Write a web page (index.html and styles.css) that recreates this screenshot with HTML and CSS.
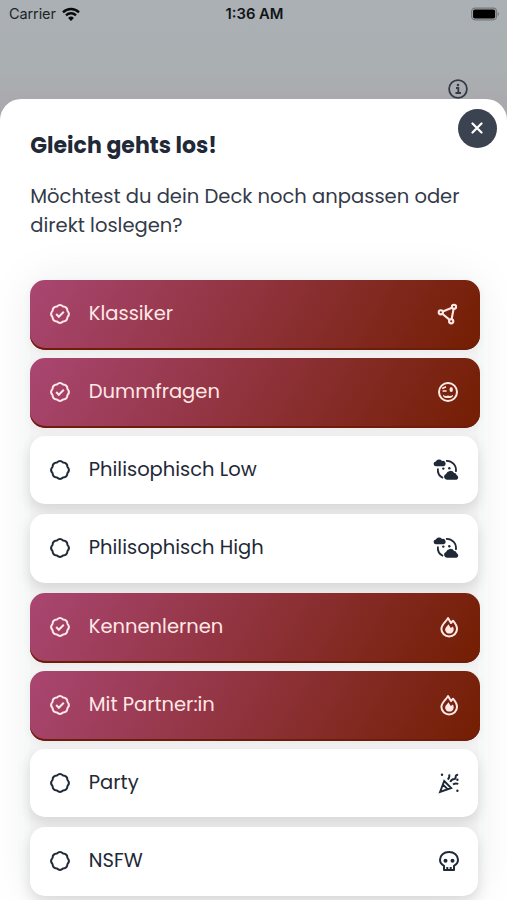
FILE: index.html
```html
<!DOCTYPE html>
<html lang="de">
<head>
<meta charset="UTF-8">
<meta name="viewport" content="width=device-width, initial-scale=1.0">
<title>Gleich gehts los!</title>
<link rel="stylesheet" href="styles.css">
</head>
<body>
<svg class="sprite" aria-hidden="true">
    <symbol id="badge" viewBox="0 0 24 24">
        <path d="M19.85 8.75Q19.74 4.26 15.25 4.15 12 1.05 8.75 4.15 4.26 4.26 4.15 8.75 1.05 12 4.15 15.25 4.26 19.74 8.75 19.85 12 22.95 15.25 19.85 19.74 19.74 19.85 15.25 22.95 12 19.85 8.75z" transform="translate(.6 .6) scale(.95)" fill="none" stroke="currentColor" stroke-width="2.1"/>
    </symbol>
    <symbol id="badge-check" viewBox="0 0 24 24">
        <use href="#badge"/>
        <path d="m8.2 12 2.6 2.7 5-5" fill="none" stroke="currentColor" stroke-width="2"/>
    </symbol>
    <symbol id="network" viewBox="0 0 24 24">
        <g fill="none" stroke="currentColor" stroke-width="2.1">
            <circle cx="4.8" cy="10.3" r="2.1"/>
            <circle cx="18" cy="4.8" r="2.1"/>
            <circle cx="15.2" cy="19.3" r="2.1"/>
            <path d="m6.8 9.5 9.2-3.8M6.3 11.8l7.4 6.1M17.6 6.9l-2 10.4"/>
        </g>
    </symbol>
    <symbol id="wink" viewBox="0 0 24 24">
        <g fill="none" stroke="currentColor" stroke-width="2">
            <circle cx="12" cy="12" r="9"/>
            <path d="m6.2 8.5 3.8-1.8M6.6 11h4" stroke-width="1.7"/>
            <path d="M6.8 14.7q2.6 1.9 5.2.9 2.6 1 5.2-.9-.6 4-5.2 3.2-4.6.8-5.2-3.2z" fill="currentColor" stroke="none"/>
        </g>
        <ellipse cx="15.2" cy="9.5" rx="1.7" ry="2.6" fill="currentColor"/>
    </symbol>
    <symbol id="clouds" viewBox="0 0 26 24">
        <path d="M13 2.9a9.2 9.2 0 0 1 9.8 11M4.9 10.5a9.2 9.2 0 0 0 5.2 9.5" fill="none" stroke="currentColor" stroke-width="1.8"/>
        <g fill="currentColor">
            <path d="M3.3 8.2a2.4 2.4 0 0 1-.5-4.8A3.8 3.8 0 0 1 9 2.9a2.7 2.7 0 0 1 1.6 5.3zM14 21.7a3 3 0 0 1-1-5.8 4.6 4.6 0 0 1 8.2-.9 2.6 2.6 0 0 1 2.5 2.2 2.4 2.4 0 0 1-.2 4.5z"/>
            <circle cx="10.3" cy="10.6" r="1.2"/>
            <circle cx="16.3" cy="10.2" r="1.2"/>
        </g>
    </symbol>
    <symbol id="flame" viewBox="0 0 24 24">
        <path d="M12 3C10.6 6.5 5.4 9.3 5.4 14a7.8 7.4 0 0 0 15.6 0c0-3.1-1.9-5.9-4-8.300L15 8z" fill="none" stroke="currentColor" stroke-width="2" stroke-linejoin="round"/>
        <path d="M12.4 9.3c-.7 2-3.3 3-3.3 5.2a4.3 4.1 0 0 0 8.6 0q0-1.6-.8-2.9l-2.1 1.5z" fill="currentColor"/>
    </symbol>
    <symbol id="party" viewBox="0 0 24 24">
        <g fill="none" stroke="currentColor" stroke-width="1.9">
            <path d="m7.2 10 7 7-11.1 4zM6.3 13.8l4.5 4.5M10.7 8.6q2-1.5 1.6-5.2M13.3 11q1.2-2.8 3.8-3 1.7-.2 1.5-2 .1-2.3 2.5-2.3M16 13.6q2.2-1.7 5.3-.7"/>
        </g>
        <g fill="currentColor">
            <circle cx="5" cy="3.8" r="1.2"/>
            <circle cx="20.4" cy="8.7" r="1.2"/>
            <circle cx="20.4" cy="19.7" r="1.2"/>
        </g>
    </symbol>
    <symbol id="skull" viewBox="0 0 24 24">
        <path d="M12 3c-5.2 0-9 3.3-9 7.8 0 2.8 1.5 4.7 4 6V21h10v-4.2c2.5-1.3 4-3.2 4-6C21 6.3 17.2 3 12 3zM10.3 18v3M13.7 18v3" fill="none" stroke="currentColor" stroke-width="2" stroke-linejoin="round"/>
        <circle cx="8.5" cy="11.8" r="2" fill="currentColor"/>
        <circle cx="15.5" cy="11.8" r="2" fill="currentColor"/>
    </symbol>
</svg>

<div class="screen">
    <header class="status-bar">
        <div class="carrier">
            <span>Carrier</span>
            <svg class="wifi" viewBox="0 0 18 14">
                <path d="M1 5.3a11.5 11.5 0 0 1 16 0M4 8.3a7.2 7.2 0 0 1 10 0" fill="none" stroke="#080a0c" stroke-width="2.4"/>
                <path d="M9 14 6.1 10.9a4.2 4.2 0 0 1 5.8 0z" fill="#080a0c"/>
            </svg>
        </div>
        <span class="time">1:36 AM</span>
        <svg class="battery" viewBox="0 0 31 14">
            <rect x=".7" y=".7" width="26.6" height="12.6" rx="3.5" fill="none" stroke="#74787a" stroke-width="1.3"/>
            <rect x="2.2" y="2.2" width="23.6" height="9.6" rx="1.8" fill="#000"/>
            <path d="M28.5 4.8q3 2.2 0 4.4z" fill="#74787a"/>
        </svg>
    </header>
    <div class="toolbar">
        <svg class="info" viewBox="0 0 20 20">
            <circle cx="10" cy="10" r="8.9" fill="none" stroke="currentColor" stroke-width="1.8"/>
            <path d="M8 9h2.3v5M7.5 14h5.5" fill="none" stroke="currentColor" stroke-width="1.8"/>
            <circle cx="10" cy="6" r="1.3" fill="currentColor"/>
        </svg>
    </div>

    <main class="sheet">
        <button class="close" aria-label="Schließen">
            <svg viewBox="0 0 12 12"><path d="m1.5 1.5 9 9m0-9-9 9" fill="none" stroke="currentColor" stroke-width="2.2" stroke-linecap="round"/></svg>
        </button>
        <h1>Gleich gehts los!</h1>
        <p class="intro">Möchtest du dein Deck noch anpassen oder<br>direkt loslegen?</p>
        <div class="decks">
            <div class="deck selected">
                <svg class="check"><use href="#badge-check"/></svg>
                <span class="name">Klassiker</span>
                <svg class="icon"><use href="#network"/></svg>
            </div>
            <div class="deck selected">
                <svg class="check"><use href="#badge-check"/></svg>
                <span class="name">Dummfragen</span>
                <svg class="icon"><use href="#wink"/></svg>
            </div>
            <div class="deck">
                <svg class="check"><use href="#badge"/></svg>
                <span class="name">Philisophisch Low</span>
                <svg class="icon wide"><use href="#clouds"/></svg>
            </div>
            <div class="deck">
                <svg class="check"><use href="#badge"/></svg>
                <span class="name">Philisophisch High</span>
                <svg class="icon wide"><use href="#clouds"/></svg>
            </div>
            <div class="deck selected">
                <svg class="check"><use href="#badge-check"/></svg>
                <span class="name">Kennenlernen</span>
                <svg class="icon"><use href="#flame"/></svg>
            </div>
            <div class="deck selected">
                <svg class="check"><use href="#badge-check"/></svg>
                <span class="name">Mit Partner:in</span>
                <svg class="icon"><use href="#flame"/></svg>
            </div>
            <div class="deck">
                <svg class="check"><use href="#badge"/></svg>
                <span class="name">Party</span>
                <svg class="icon"><use href="#party"/></svg>
            </div>
            <div class="deck">
                <svg class="check"><use href="#badge"/></svg>
                <span class="name">NSFW</span>
                <svg class="icon"><use href="#skull"/></svg>
            </div>
        </div>
    </main>
</div>
</body>
</html>
```

FILE: styles.css
```css
* {
    box-sizing: border-box;
}
body {
    margin: 0;
    font-family: Poppins, Inter, sans-serif;
    color: #1f2937;
}
svg {
    display: block;
    flex-shrink: 0;
}
.sprite {
    position: absolute;
    width: 0;
    height: 0;
}
.screen {
    display: flex;
    flex-direction: column;
    height: 900px;
    overflow: hidden;
    background: linear-gradient(#aab0b3 0, #aaafb2 70px, #aaa9ad 105px);
}
.status-bar {
    display: grid;
    grid-template-columns: 1fr auto 1fr;
    align-items: center;
    height: 27px;
    padding: 0 7px 0 9px;
    font-family: Inter, sans-serif;
    font-size: 14.5px;
    color: #202428;
}
.carrier {
    display: flex;
    align-items: center;
    gap: 6px;
    letter-spacing: -0.1px;
}
.wifi {
    width: 18px;
    height: 14px;
}
.time {
    font-size: 14.8px;
    font-weight: 600;
    color: #111417;
}
.battery {
    justify-self: end;
    width: 29px;
    height: 14px;
}
.toolbar {
    display: flex;
    justify-content: flex-end;
    height: 71.5px;
    padding: 52px 39px 0 0;
    color: #343b48;
}
.info {
    width: 20px;
    height: 20px;
}
.sheet {
    position: relative;
    flex: 1;
    padding: 32px 30.3px 0;
    border-radius: 21px 21px 0 0;
    background: #fff;
    overflow: hidden;
}
.close {
    position: absolute;
    top: 10px;
    right: 10px;
    display: flex;
    align-items: center;
    justify-content: center;
    width: 39px;
    height: 39px;
    padding: 0 1px 1px 0;
    border: 0;
    border-radius: 50%;
    background: #3c4350;
    color: #fff;
}
.close svg {
    width: 12px;
    height: 12px;
}
h1 {
    margin: 0;
    font-size: 22px;
    line-height: 30px;
    font-weight: 700;
    white-space: nowrap;
}
.intro {
    height: 58px;
    margin: 21px 0 40px;
    font-size: 19.54px;
    line-height: 29.3px;
    color: #333a48;
    white-space: nowrap;
}
.decks {
    display: grid;
    grid-template-columns: 447.5px;
    grid-auto-rows: 68.25px;
    row-gap: 10px;
    width: 447.5px;
    border-radius: 16px;
    background: rgba(31, 41, 55, 0.05);
    box-shadow: 0 0 45px rgba(31, 41, 55, 0.08);
}
.deck {
    display: flex;
    align-items: center;
    padding: 0 17px 0 17.5px;
    border-radius: 15px;
    background: #fff;
    box-shadow: 0 6px 14px rgba(0, 0, 0, 0.13);
}
.deck.selected {
    width: 450px;
    height: 70.5px;
    padding-right: 20px;
    padding-bottom: 2px;
    background: linear-gradient(120deg, #aa4672 0%, #8d3137 53%, #751f05 97%);
    box-shadow: inset 0 -2px 0 #701c0b, 0 2px 8px rgba(0, 0, 0, 0.05);
    color: #ffe8e5;
}
.check {
    width: 24px;
    height: 24px;
}
.name {
    flex: 1;
    margin-left: 17px;
    font-size: 19.5px;
    line-height: 30px;
    white-space: nowrap;
}
.icon {
    width: 24px;
    height: 24px;
}
.icon.wide {
    width: 26px;
    margin-right: 2px;
}
```
